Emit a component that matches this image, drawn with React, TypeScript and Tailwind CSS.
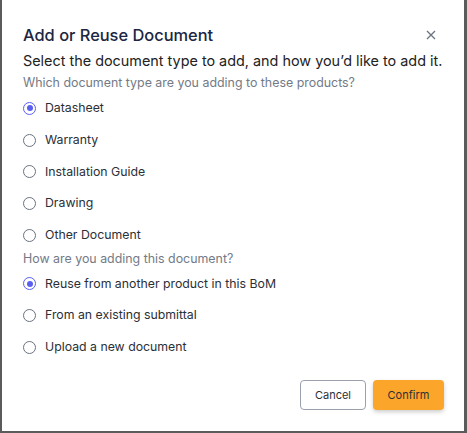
import React, { useState } from 'react';

const docTypes = ['Datasheet', 'Warranty', 'Installation Guide', 'Drawing', 'Other Document'];
const methods = ['Reuse from another product in this BoM', 'From an existing submittal', 'Upload a new document'];

const Radio: React.FC<{ checked: boolean; label: string; onClick: () => void }> = ({ checked, label, onClick }) => (
  <button type="button" onClick={onClick} className="flex h-[31.7px] items-center gap-[9px] text-left">
    <span
      className={`flex h-[13px] w-[13px] items-center justify-center rounded-full border-[1.5px] ${
        checked ? 'border-[#5b5ff0]' : 'border-[#6b7280]'
      }`}
    >
      {checked && <span className="h-[6px] w-[6px] rounded-full bg-[#5b5ff0]" />}
    </span>
    <span className="text-[12.3px] text-[#2b2f36]">{label}</span>
  </button>
);

const App: React.FC = () => {
  const [docType, setDocType] = useState('Datasheet');
  const [method, setMethod] = useState(methods[0]);

  return (
    <div className="flex h-[433px] w-[467px] bg-[#5b5b5b] font-['Inter',sans-serif]">
      <div className="ml-[2px] mb-[2px] flex w-[462px] flex-col bg-white pl-[21px] pr-[24px] pt-[21px]">
        {/* Header */}
        <div className="flex h-7 items-center justify-between">
          <h2 className="text-[16.4px] font-medium text-[#1c2541]">Add or Reuse Document</h2>
          <button type="button" className="mr-[4px] text-[#6b7280]">
            <svg width="10" height="10" viewBox="0 0 10 10" fill="none" stroke="currentColor" strokeWidth="1.3">
              <path d="M1 1l8 8M9 1l-8 8" />
            </svg>
          </button>
        </div>
        <p className="whitespace-nowrap text-[14.4px] leading-6 text-[#222]">
          Select the document type to add, and how you’d like to add it.
        </p>

        <p className="mt-[2px] text-[12.4px] leading-4 text-[#737a86]">Which document type are you adding to these products?</p>
        <div className="mt-[1.5px] flex flex-col">
          {docTypes.map((t) => (
            <Radio key={t} label={t} checked={docType === t} onClick={() => setDocType(t)} />
          ))}
        </div>

        <p className="text-[12.4px] leading-4 text-[#737a86]">How are you adding this document?</p>
        <div className="mt-px flex flex-col">
          {methods.map((m) => (
            <Radio key={m} label={m} checked={method === m} onClick={() => setMethod(m)} />
          ))}
        </div>

        {/* Footer */}
        <div className="mt-[17px] flex justify-end gap-[7px]">
          <button
            type="button"
            className="h-[30px] w-[66px] rounded-[4px] border border-[#9aa1ad] bg-white text-[11px] text-[#2b2f36]"
          >
            Cancel
          </button>
          <button
            type="button"
            className="mr-[-4px] h-[30px] w-[71px] rounded-[4px] bg-[#fba62b] text-[11px] text-[#2b2f36] shadow-[0_2px_4px_rgba(0,0,0,0.2)]"
          >
            Confirm
          </button>
        </div>
      </div>
    </div>
  );
};

export default App;
